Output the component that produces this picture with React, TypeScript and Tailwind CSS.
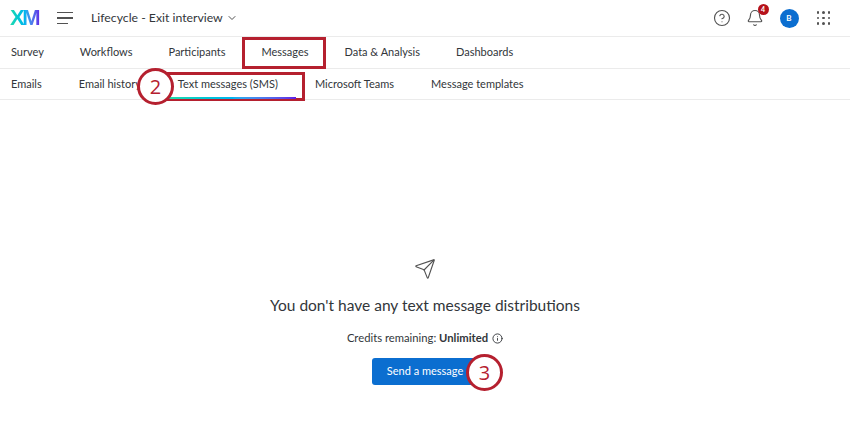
import { Bell, ChevronDown, CircleHelp, Info, Send } from "lucide-react";

const mainTabs = ["Survey", "Workflows", "Participants", "Messages", "Data & Analysis", "Dashboards"];
const subTabs = ["Emails", "Email history", "Text messages (SMS)", "Microsoft Teams", "Message templates"];

function Callout({ n, className }: { n: number; className: string }) {
  return (
    <span
      className={`absolute z-20 flex h-[37px] w-[37px] items-center justify-center rounded-full border-[3px] border-[#b5202f] bg-white font-['Open_Sans',sans-serif] text-[20px] text-[#b5202f] ${className}`}
    >
      {n}
    </span>
  );
}

function AppGrid() {
  return (
    <div className="grid grid-cols-3 gap-[3px]">
      {Array.from({ length: 9 }).map((_, i) => (
        <span key={i} className="h-[2.5px] w-[2.5px] rounded-full bg-[#525252]" />
      ))}
    </div>
  );
}

function Header() {
  return (
    <header className="flex h-[37px] items-center border-b border-[#ebebeb] pl-[10px] pr-[20px]">
      <span className="w-[30px] bg-gradient-to-r from-[#21dbaa] via-[#00b4ef] to-[#5f1ae5] bg-clip-text font-['Liberation_Sans',sans-serif] text-[22px] font-bold leading-none tracking-[-2.5px] text-transparent">
        XM
      </span>
      <div className="ml-[17px] flex w-[16px] flex-col gap-[4px]">
        <span className="h-[1.5px] w-full bg-[#525252]" />
        <span className="h-[1.5px] w-full bg-[#525252]" />
        <span className="h-[1.5px] w-[11px] bg-[#525252]" />
      </div>
      <span className="ml-[18px] text-[12.25px] text-[#32363a]">Lifecycle - Exit interview</span>
      <ChevronDown className="ml-[3px] h-[12px] w-[12px] text-[#525252]" />
      <div className="ml-auto flex items-center">
        <CircleHelp className="h-[18px] w-[18px] text-[#525252]" strokeWidth={1.5} />
        <div className="relative ml-[15px]">
          <Bell className="h-[18px] w-[18px] text-[#525252]" strokeWidth={1.5} />
          <span className="absolute -right-[5px] -top-[5px] flex h-[11px] w-[11px] items-center justify-center rounded-full bg-[#b5121b] text-[7px] font-bold text-white">
            4
          </span>
        </div>
        <span className="ml-[16px] flex h-[19px] w-[19px] items-center justify-center rounded-full bg-[#0b6ed0] text-[8px] font-bold text-white">
          B
        </span>
        <div className="ml-[18px]">
          <AppGrid />
        </div>
      </div>
    </header>
  );
}

function TabRow({ tabs, active, gap }: { tabs: string[]; active?: string; gap: string }) {
  return (
    <nav className={`flex h-[31.5px] items-center border-b border-[#ebebeb] pl-[11px] text-[11px] text-[#32363a] ${gap}`}>
      {tabs.map((tab) => (
        <span key={tab} className="relative flex h-full items-center">
          {tab}
          {tab === active && (
            <span className="absolute -left-[9px] -right-[18px] bottom-0 z-10 h-[2px] bg-gradient-to-r from-[#21dbaa] via-[#00b4ef] to-[#5f1ae5]" />
          )}
        </span>
      ))}
    </nav>
  );
}

export default function App() {
  return (
    <div className="relative h-[425px] w-[850px] overflow-hidden bg-white font-['Lato',sans-serif]">
      <Header />
      <TabRow tabs={mainTabs} gap="gap-[36px]" />
      <TabRow tabs={subTabs} active="Text messages (SMS)" gap="gap-[37px]" />

      <main className="flex flex-col items-center pt-[158px]">
        <Send className="h-[22px] w-[22px] text-[#525252]" strokeWidth={1.25} />
        <h1 className="mt-[14px] text-[15.5px] leading-[22px] text-[#32363a]">
          You don't have any text message distributions
        </h1>
        <p className="mt-[14px] flex items-center text-[11.25px] leading-[16px] text-[#32363a]">
          Credits remaining:&nbsp;<b className="font-bold">Unlimited</b>
          <Info className="ml-[4px] h-[11px] w-[11px]" />
        </p>
        <button className="mt-[12px] h-[27px] w-[106px] rounded-[3px] bg-[#0b6ed0] text-[11px] text-white">
          Send a message
        </button>
      </main>

      <span className="absolute left-[242px] top-[37px] h-[32px] w-[84px] border-[3px] border-[#b5202f]" />
      <span className="absolute left-[165px] top-[72px] h-[29px] w-[140px] border-[3px] border-[#b5202f]" />
      <Callout n={2} className="left-[137px] top-[68px]" />
      <Callout n={3} className="left-[466px] top-[354px]" />
    </div>
  );
}
